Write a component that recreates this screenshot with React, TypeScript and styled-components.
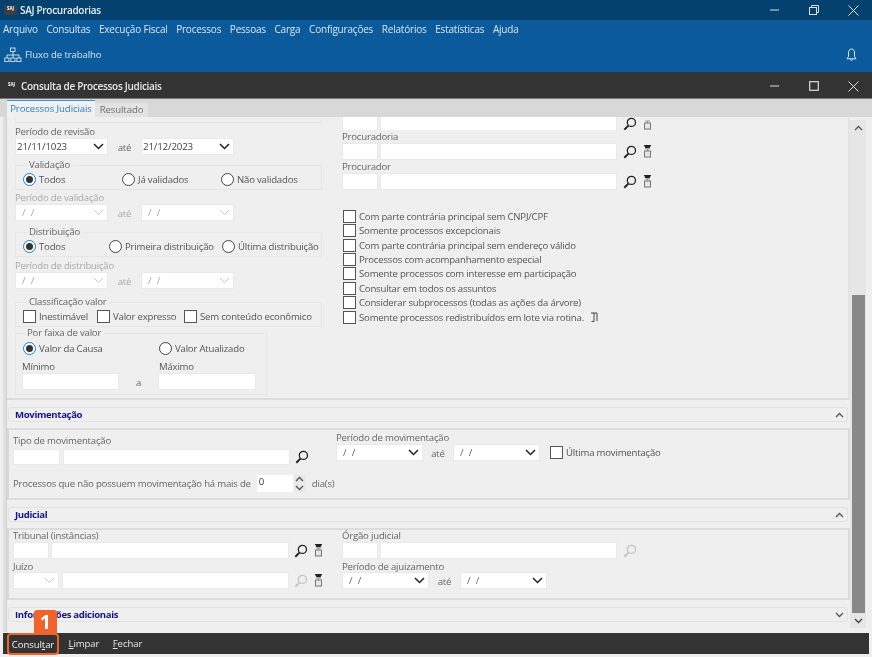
import React from "react";
import styled, { createGlobalStyle } from "styled-components";

const Global = createGlobalStyle`
  html, body { margin: 0; padding: 0; background: #f0f0f0; }
  * { box-sizing: border-box; }
`;
const Window = styled.div`
  width: 872px; height: 657px; overflow: hidden; display: flex; flex-direction: column;
  background: #efefef; font-family: "Open Sans", "Noto Sans", sans-serif; font-size: 9.6px; color: #555;
  letter-spacing: -0.2px; filter: blur(0.3px);
`;
const AppTitleBar = styled.div`
  height: 20px; flex: none; background: #04416f; display: flex; align-items: center; color: #e6edf3; padding-left: 4px;
`;
const Logo = styled.span`
  width: 13px; height: 10px; flex: none; background: #3a3f45; color: #fff; font-size: 4.5px; font-weight: 700; line-height: 7px; text-align: center; letter-spacing: 0;
`;
const DialogLogo = styled(Logo)`
  background: transparent; width: 13px; height: 8px; line-height: 6px; margin-top: -2px;
`;
const WinTitle = styled.span`
  margin-left: 3px; font-size: 10px; font-weight: 600; letter-spacing: -0.3px; flex: 1; white-space: nowrap;
`;
const WinButtons = styled.div`
  display: flex; width: 89px; margin-right: 13px; justify-content: space-between; align-items: center;
  svg { display: block; }
`;
const MenuBar = styled.div`
  height: 21px; flex: none; background: #0a5a9c; display: flex; align-items: center; gap: 8.6px; padding: 0 0 3px 3px; color: #dbe6ef; font-size: 10px; white-space: nowrap;
`;
const ToolBar = styled.div`
  height: 31px; flex: none; background: #0a5a9c; display: flex; align-items: center; padding: 0 15px 4px 4px; color: #d8e3ec; font-size: 9.6px; letter-spacing: -0.1px; justify-content: space-between;
`;
const ToolItem = styled.div`
  display: flex; align-items: center; gap: 3px;
`;
const DialogBar = styled.div`
  height: 27px; flex: none; background: #333; border-bottom: 1px solid #777; display: flex; align-items: center; padding: 2px 0 0 5px; color: #e8e8e8;
`;
const TabStrip = styled.div`
  height: 18px; flex: none; background: #d8d8d8; display: flex; align-items: flex-end; padding-left: 7px;
`;
const Tab = styled.div<{ $active?: boolean }>`
  height: ${p => (p.$active ? 17 : 14)}px; width: ${p => (p.$active ? 88 : 53)}px; text-align: center; letter-spacing: -0.1px;
  background: ${p => (p.$active ? "#f0f0f0" : "#e3e3e3")};
  border-top: ${p => (p.$active ? "1px solid #3c93d6" : "none")};
  color: ${p => (p.$active ? "#2a80c6" : "#707070")}; font-size: 9.6px; line-height: ${p => (p.$active ? 15 : 14)}px;
`;
const Content = styled.div`
  height: 515px; flex: none; display: flex; padding-left: 3px; padding-right: 6px; overflow: hidden;
`;
const Rail = styled.div`
  width: 4px; flex: none; background: #e0e0e0; border-right: 1px solid #d0d0d0;
`;
const Form = styled.div`
  width: 843px; flex: none; display: flex; flex-direction: column;
`;
const TopPanel = styled.div`
  height: 283px; flex: none; display: grid; grid-template-columns: 335px 1fr; border-bottom: 2px solid #dcdcdc; border-right: 2px solid #e4e4e4;
`;
const Col = styled.div<{ $pl?: number; $mt?: number }>`
  padding-left: ${p => p.$pl ?? 0}px; margin-top: ${p => p.$mt ?? 0}px; display: flex; flex-direction: column; align-items: flex-start; min-width: 0;
`;
const ClippedEdge = styled.div`
  width: 307px; height: 6px; flex: none; border: 1px solid #e6e6e6; border-top: none;
`;
const Label = styled.div<{ $mt?: number; $disabled?: boolean }>`
  height: 12px; line-height: 12px; flex: none; margin-top: ${p => p.$mt ?? 0}px; white-space: nowrap; color: ${p => (p.$disabled ? "#aaa" : "#666")};
`;
const Row = styled.div<{ $mt?: number; $gap?: number; $h?: number }>`
  display: flex; align-items: center; flex: none; margin-top: ${p => p.$mt ?? 0}px; gap: ${p => p.$gap ?? 0}px; height: ${p => p.$h ?? 17}px;
`;
const Input = styled.div<{ $w: number; $h?: number }>`
  width: ${p => p.$w}px; height: ${p => p.$h ?? 17}px; flex: none; background: #fff; border: 1px solid #e9e9e9;
`;
const Select = styled.div<{ $w: number; $disabled?: boolean; $pad: number; $color: string }>`
  width: ${p => p.$w}px; height: 17px; flex: none; background: #fff; border: 1px solid #e9e9e9; display: flex; align-items: center; justify-content: space-between;
  padding: 0 3px 0 ${p => p.$pad}px; font-size: 9.8px; word-spacing: 3px; color: ${p => p.$color};
`;
const Ate = styled.span<{ $w?: number; $disabled?: boolean }>`
  width: ${p => p.$w ?? 33}px; text-align: center; flex: none; padding-top: 2px; color: ${p => (p.$disabled ? "#aaa" : "#666")};
`;
const Group = styled.div<{ $mt?: number; $w?: number; $h: number }>`
  position: relative; flex: none; width: ${p => p.$w ?? 307}px; height: ${p => p.$h}px; margin-top: ${p => p.$mt ?? 0}px; border: 1px solid #e6e6e6;
`;
const Legend = styled.span<{ $l?: number }>`
  position: absolute; top: -7px; left: ${p => p.$l ?? 12}px; height: 12px; line-height: 12px; background: #efefef; padding: 0 3px 0 1px; color: #666; white-space: nowrap;
`;
const OptionRow = styled.div<{ $mt?: number; $pl?: number }>`
  display: flex; align-items: center; height: 14px; margin-top: ${p => p.$mt ?? 6}px; padding-left: ${p => p.$pl ?? 7}px;
`;
const Option = styled.label<{ $w?: number }>`
  display: flex; align-items: center; gap: 3px; width: ${p => (p.$w ? p.$w + "px" : "auto")}; flex: none; white-space: nowrap; color: #555;
`;
const Radio = styled.span<{ $on?: boolean }>`
  width: 13px; height: 13px; flex: none; border-radius: 50%; background: #fff;
  border: 1.5px solid ${p => (p.$on ? "#1a7fd0" : "#444")}; display: flex; align-items: center; justify-content: center;
  &::after { content: ""; width: 7px; height: 7px; border-radius: 50%; background: ${p => (p.$on ? "#333" : "transparent")}; }
`;
const Box = styled.span`
  width: 13px; height: 13px; flex: none; background: #fff; border: 1.5px solid #555;
`;
const CheckList = styled.div`
  display: flex; flex-direction: column; margin-top: 19px; margin-left: 1px;
`;
const CheckItem = styled.div`
  display: flex; align-items: center; gap: 3px; height: 14.45px; white-space: nowrap; color: #555;
`;
const IconGap = styled.span<{ $w: number }>`
  width: ${p => p.$w}px; flex: none; display: flex; justify-content: center;
`;
const Clip = styled.div`
  display: flex; align-items: flex-end; height: 13px; overflow: hidden; flex: none;
`;
const SectionHeader = styled.div<{ $mt?: number }>`
  height: 15px; flex: none; margin: ${p => p.$mt ?? 7}px 2px 0 1px; border: 1px solid #e2e2e2; border-radius: 3px; display: flex; align-items: center; justify-content: space-between;
  padding: 0 3px 0 6px; font-weight: 700; font-size: 9.6px; color: #14148c; letter-spacing: -0.35px;
`;
const SectionBody = styled.div<{ $h: number }>`
  height: ${p => p.$h}px; flex: none; margin-top: 6px; border: 2px solid #dcdcdc; border-left-color: #d8d8d8; padding-left: 4px; position: relative;
`;
const TwoCols = styled.div`
  display: grid; grid-template-columns: 323px 1fr;
`;
const Spin = styled.div`
  width: 36px; height: 17px; background: #fff; padding-left: 2px; line-height: 14px; flex: none; color: #333;
`;
const SpinArrows = styled.div`
  width: 12px; height: 17px; background: #e9e9e9; display: flex; flex-direction: column; align-items: center; justify-content: space-around; flex: none; margin-left: 1px;
`;
const Scrollbar = styled.div`
  width: 16px; flex: none; height: 508px; margin-top: 3px; background: #e6e6e6; display: flex; flex-direction: column; align-items: center; justify-content: space-between;
`;
const ScrollCap = styled.div`
  height: 15px; flex: none; display: flex; align-items: center; justify-content: center;
`;
const ScrollSpace = styled.div`
  flex: 1; width: 100%; display: flex; flex-direction: column; justify-content: flex-end; align-items: center;
`;
const Thumb = styled.div`
  width: 13px; height: 318px; background: #888;
`;
const Footer = styled.div`
  height: 21px; flex: none; margin: 1px 3px 0 3px; background: #333; display: flex; align-items: center; color: #e6e6e6; padding-left: 4px; font-size: 9.6px; letter-spacing: -0.1px;
  u { text-decoration: underline; }
`;
const FooterButton = styled.div<{ $w: number }>`
  width: ${p => p.$w}px; flex: none; text-align: center;
`;
const Highlight = styled.div`
  position: relative; width: 52px; height: 22px; flex: none; margin-top: 1px; border: 2px solid #f0632b; border-radius: 4px; display: flex; align-items: center; justify-content: center; margin-right: 5px; color: #eee;
`;
const StepBadge = styled.span`
  position: absolute; left: 25px; top: -25px; width: 23px; height: 24px; background: #f0632b; border-radius: 3px 3px 0 0; color: #fff; font-size: 20px; font-weight: 700; line-height: 24px; text-align: center; font-family: "Open Sans", sans-serif;
`;

const Chevron = ({ light }: { light?: boolean }) => (
  <svg width={11} height={7} viewBox="0 0 11 7" fill="none">
    <path d="M1 1l4.5 4.5L10 1" stroke={light ? "#c8c8c8" : "#222"} strokeWidth={light ? 1 : 1.5} />
  </svg>
);
const ChevUp = ({ color = "#555" }: { color?: string }) => (
  <svg width="9" height="6" viewBox="0 0 9 6" fill="none"><path d="M1 5l3.5-3.5L8 5" stroke={color} strokeWidth="1.3" /></svg>
);
const ChevDown = ({ color = "#555" }: { color?: string }) => (
  <svg width="9" height="6" viewBox="0 0 9 6" fill="none"><path d="M1 1l3.5 3.5L8 1" stroke={color} strokeWidth="1.3" /></svg>
);
const Search = ({ light }: { light?: boolean }) => (
  <svg width="14" height="14" viewBox="0 0 13 13" fill="none" stroke={light ? "#c4c4c4" : "#222"}>
    <circle cx="7.8" cy="5" r="3.8" strokeWidth="1.2" />
    <path d="M5 8L1.2 11.8" strokeWidth="1.8" />
  </svg>
);
const FilterDoc = ({ noTop }: { noTop?: boolean }) => (
  <svg width="9" height="13" viewBox="0 0 8 13" fill="none">
    {!noTop && <path d="M0.3 0h7.4L6 3.2H2z" fill="#222" />}
    <path d="M1.5 4h5M4 4v2" stroke="#888" strokeWidth="0.8" />
    <rect x="1" y="6" width="6" height="6" fill="#e6e6e6" stroke="#777" />
  </svg>
);
const Note = () => (
  <svg width="8" height="11" viewBox="0 0 8 11" fill="none" stroke="#333" strokeWidth="0.9">
    <path d="M1 1h6v8M4 1v8.5H1.5" />
  </svg>
);
const Min = () => <svg width="10" height="10" viewBox="0 0 10 10"><path d="M0 5h9" stroke="#ddd" strokeWidth="1" /></svg>;
const Close = () => <svg width="11" height="11" viewBox="0 0 11 11"><path d="M.5.5l10 10M10.5.5l-10 10" stroke="#e4e4e4" strokeWidth="1" /></svg>;
const Restore = () => (
  <svg width="10" height="10" viewBox="0 0 10 10" fill="none" stroke="#ddd">
    <rect x="0.5" y="2.5" width="7" height="7" /><path d="M2.5 2.5v-2h7v7h-2" />
  </svg>
);
const Maximize = () => <svg width="10" height="10" viewBox="0 0 10 10" fill="none" stroke="#ddd"><rect x="0.7" y="0.7" width="8.6" height="8.6" strokeWidth="1.2" /></svg>;
const OrgChart = () => (
  <svg width="18" height="16" viewBox="0 0 18 16" fill="none" stroke="#dbe6ef" strokeWidth="0.9">
    <rect x="6.5" y="1" width="4.5" height="3.5" />
    <path d="M9 4.5V8M3 11V8h12v3M9 8v3" />
    <rect x="0.8" y="11" width="4.2" height="3.6" /><rect x="6.8" y="11" width="4.2" height="3.6" /><rect x="12.8" y="11" width="4.2" height="3.6" />
  </svg>
);
const Bell = () => (
  <svg width="11" height="14" viewBox="0 0 11 14" fill="none" stroke="#e0e8ef" strokeWidth="1">
    <path d="M5.5 1C3.2 1 2.5 3 2.5 5v3.5L1 10.8h9L8.5 8.5V5C8.5 3 7.8 1 5.5 1z" />
    <path d="M4.3 11.5c.3 1.3 2.1 1.3 2.4 0" />
  </svg>
);

const DateBox = ({ w = 93, text = "/ /", dis }: { w?: number; text?: string; dis?: boolean }) => {
  const empty = text === "/ /";
  return (
    <Select $w={w} $pad={empty ? 6 : 1} $color={dis ? "#aaa" : empty ? "#666" : "#444"}>
      <span>{text}</span>
      <Chevron light={dis} />
    </Select>
  );
};

const menus = ["Arquivo", "Consultas", "Execução Fiscal", "Processos", "Pessoas", "Carga", "Configurações", "Relatórios", "Estatísticas", "Ajuda"];
const checks = [
  "Com parte contrária principal sem CNPJ/CPF",
  "Somente processos excepcionais",
  "Com parte contrária principal sem endereço válido",
  "Processos com acompanhamento especial",
  "Somente processos com interesse em participação",
  "Consultar em todos os assuntos",
  "Considerar subprocessos (todas as ações da árvore)",
];

export default function App() {
  return (
    <Window>
      <Global />
      <AppTitleBar>
        <Logo>SAJ</Logo>
        <WinTitle>SAJ Procuradorias</WinTitle>
        <WinButtons><Min /><Restore /><Close /></WinButtons>
      </AppTitleBar>
      <MenuBar>{menus.map(m => <span key={m}>{m}</span>)}</MenuBar>
      <ToolBar>
        <ToolItem><OrgChart /><span>Fluxo de trabalho</span></ToolItem>
        <Bell />
      </ToolBar>
      <DialogBar>
        <DialogLogo>SAJ</DialogLogo>
        <WinTitle>Consulta de Processos Judiciais</WinTitle>
        <WinButtons><Min /><Maximize /><Close /></WinButtons>
      </DialogBar>
      <TabStrip>
        <Tab $active>Processos Judiciais</Tab>
        <Tab>Resultado</Tab>
      </TabStrip>
      <Content>
        <Rail />
        <Form>
          <TopPanel>
            <Col $pl={8}>
              <ClippedEdge />
              <Label $mt={3}>Período de revisão</Label>
              <Row>
                <DateBox text="21/11/1023" />
                <Ate>até</Ate>
                <DateBox text="21/12/2023" />
              </Row>
              <Group $mt={10} $h={25}>
                <Legend>Validação</Legend>
                <OptionRow>
                  <Option $w={99}><Radio $on />Todos</Option>
                  <Option $w={99}><Radio />Já validados</Option>
                  <Option><Radio />Não validados</Option>
                </OptionRow>
              </Group>
              <Label $mt={2} $disabled>Período de validação</Label>
              <Row>
                <DateBox dis />
                <Ate $disabled>até</Ate>
                <DateBox dis />
              </Row>
              <Group $mt={11} $h={25}>
                <Legend>Distribuição</Legend>
                <OptionRow>
                  <Option $w={86}><Radio $on />Todos</Option>
                  <Option $w={113}><Radio />Primeira distribuição</Option>
                  <Option><Radio />Última distribuição</Option>
                </OptionRow>
              </Group>
              <Label $mt={3} $disabled>Período de distribuição</Label>
              <Row>
                <DateBox dis />
                <Ate $disabled>até</Ate>
                <DateBox dis />
              </Row>
              <Group $mt={13} $h={25}>
                <Legend>Classificação valor</Legend>
                <OptionRow $mt={6} $pl={7}>
                  <Option $w={74}><Box />Inestimável</Option>
                  <Option $w={87}><Box />Valor expresso</Option>
                  <Option><Box />Sem conteúdo econômico</Option>
                </OptionRow>
              </Group>
              <Group $mt={6} $w={252} $h={62}>
                <Legend $l={10}>Por faixa de valor</Legend>
                <OptionRow $mt={7} $pl={7}>
                  <Option $w={136}><Radio $on />Valor da Causa</Option>
                  <Option><Radio />Valor Atualizado</Option>
                </OptionRow>
                <OptionRow $mt={4} $pl={6}>
                  <Option $w={137}>Mínimo</Option>
                  <Option>Máximo</Option>
                </OptionRow>
                <Row $h={17}>
                  <Ate $w={6} />
                  <Input $w={97} />
                  <Ate $w={39}>a</Ate>
                  <Input $w={98} />
                </Row>
              </Group>
            </Col>
            <Col>
              <Clip>
                <Row $h={13}>
                  <Input $w={36} /><IconGap $w={2} /><Input $w={237} /><IconGap $w={25}><Search /></IconGap><IconGap $w={11}><FilterDoc noTop /></IconGap>
                </Row>
              </Clip>
              <Label $mt={1}>Procuradoria</Label>
              <Row>
                <Input $w={36} /><IconGap $w={2} /><Input $w={237} /><IconGap $w={25}><Search /></IconGap><IconGap $w={11}><FilterDoc /></IconGap>
              </Row>
              <Label $mt={1}>Procurador</Label>
              <Row>
                <Input $w={36} /><IconGap $w={2} /><Input $w={237} /><IconGap $w={25}><Search /></IconGap><IconGap $w={11}><FilterDoc /></IconGap>
              </Row>
              <CheckList>
                {checks.map(c => <CheckItem key={c}><Box />{c}</CheckItem>)}
                <CheckItem><Box />Somente processos redistribuídos em lote via rotina.<IconGap $w={14}><Note /></IconGap></CheckItem>
              </CheckList>
            </Col>
          </TopPanel>

          <SectionHeader>Movimentação<ChevUp /></SectionHeader>
          <SectionBody $h={72}>
            <TwoCols>
              <Col $mt={5}>
                <Label>Tipo de movimentação</Label>
                <Row $mt={2} $h={16}>
                  <Input $w={47} $h={16} /><IconGap $w={3} /><Input $w={227} $h={16} /><IconGap $w={23}><Search /></IconGap>
                </Row>
              </Col>
              <Col $mt={2}>
                <Label>Período de movimentação</Label>
                <Row>
                  <DateBox w={87} />
                  <Ate $w={30}>até</Ate>
                  <DateBox w={87} />
                  <IconGap $w={10} />
                  <CheckItem><Box />Última movimentação</CheckItem>
                </Row>
              </Col>
            </TwoCols>
            <Row $mt={10}>
              <Label>Processos que não possuem movimentação há mais de</Label>
              <IconGap $w={6} />
              <Spin>0</Spin>
              <SpinArrows><ChevUp /><ChevDown /></SpinArrows>
              <IconGap $w={6} />
              <Label>dia(s)</Label>
            </Row>
          </SectionBody>

          <SectionHeader>Judicial<ChevUp /></SectionHeader>
          <SectionBody $h={72}>
            <TwoCols>
              <Col>
                <Label>Tribunal (instâncias)</Label>
                <Row>
                  <Input $w={36} /><IconGap $w={2} /><Input $w={238} /><IconGap $w={23}><Search /></IconGap><IconGap $w={13}><FilterDoc /></IconGap>
                </Row>
                <Label $mt={2}>Juízo</Label>
                <Row $mt={-1}>
                  <Select $w={46} $pad={6} $color="#aaa"><span /><Chevron light /></Select>
                  <IconGap $w={3} /><Input $w={227} /><IconGap $w={23}><Search light /></IconGap><IconGap $w={13}><FilterDoc /></IconGap>
                </Row>
              </Col>
              <Col $pl={6}>
                <Label>Órgão judicial</Label>
                <Row>
                  <Input $w={36} /><IconGap $w={2} /><Input $w={237} /><IconGap $w={25}><Search light /></IconGap>
                </Row>
                <Label $mt={2}>Período de ajuizamento</Label>
                <Row $mt={-1}>
                  <DateBox w={87} />
                  <Ate $w={31}>até</Ate>
                  <DateBox w={87} />
                </Row>
              </Col>
            </TwoCols>
          </SectionBody>

          <SectionHeader>Informações adicionais<ChevDown /></SectionHeader>
        </Form>
        <Scrollbar>
          <ScrollCap><ChevUp /></ScrollCap>
          <ScrollSpace><Thumb /></ScrollSpace>
          <ScrollCap><ChevDown color="#444" /></ScrollCap>
        </Scrollbar>
      </Content>
      <Footer>
        <Highlight>Consul<u>t</u>ar<StepBadge>1</StepBadge></Highlight>
        <FooterButton $w={40}><u>L</u>impar</FooterButton>
        <FooterButton $w={47}><u>F</u>echar</FooterButton>
      </Footer>
    </Window>
  );
}
